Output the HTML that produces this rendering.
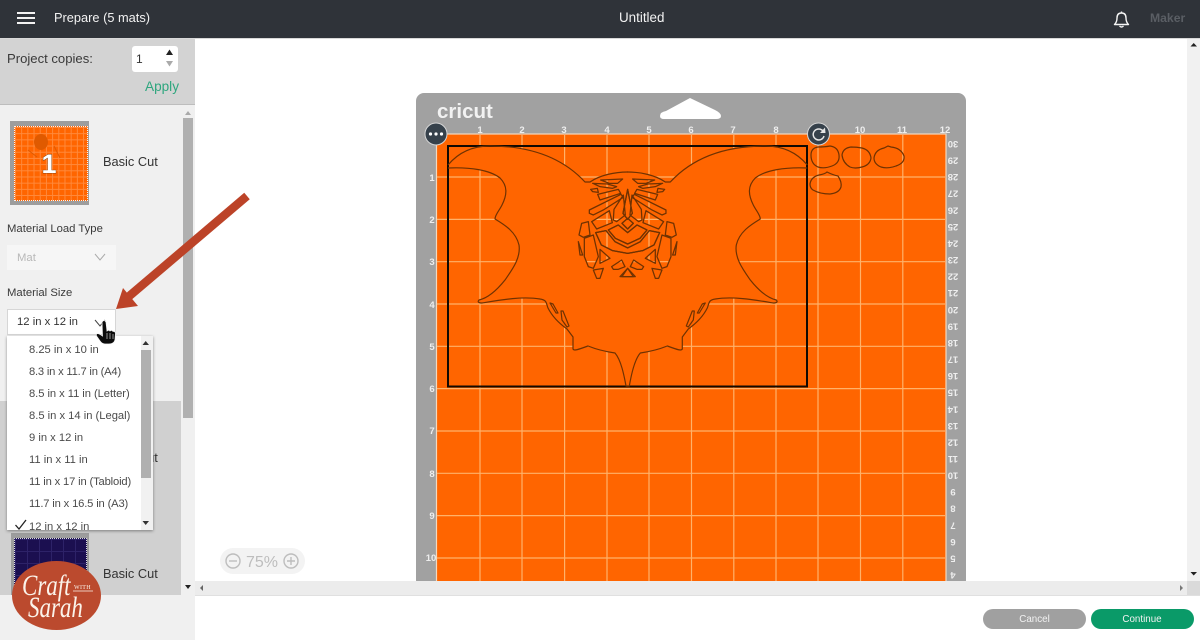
<!DOCTYPE html>
<html><head><meta charset="utf-8"><title>Prepare</title>
<style>
html,body{margin:0;padding:0;width:1200px;height:640px;overflow:hidden;background:#fff;font-family:"Liberation Sans",sans-serif;color:#333}
div,span{position:absolute;white-space:nowrap;box-sizing:border-box}
.t{line-height:16px;height:16px}
.item{left:29px;font-size:11.2px;color:#4a4a4a;line-height:14px}
svg{position:absolute;left:0;top:0}
</style></head><body>
<!-- main -->
<svg width="1200" height="640" viewBox="0 0 1200 640" style="z-index:1">
<defs>
<path id="hp" transform="translate(550,160) scale(.3333)" d="M152,60 L218,57 L203,70 L178,70 Z M128,70 L172,72 L200,80 L188,85 L150,80 Z M122,88 L142,85 L145,97 L128,95 Z M143,103 L205,88 L212,100 L150,120 Z M118,150 L213,103 L220,112 L160,150 L130,165 L118,160 Z M192,148 L220,105 L226,165 L200,185 L190,180 Z M233,88 L247,160 L233,178 L219,160 Z M125,185 L178,152 L187,188 L140,207 Z M233,175 L250,190 L233,207 L216,190 Z M175,210 L205,195 L233,218 L261,195 L291,210 L270,235 L233,252 L196,235 Z M137,218 L168,212 L195,245 L233,264 L271,245 L298,212 L329,218 L312,255 L278,272 L233,280 L188,272 L154,255 Z M87,225 L95,190 L115,185 L120,225 L100,232 Z M85,245 L98,285 L90,285 Z M103,235 L130,225 L145,290 L130,325 L115,320 L103,290 Z M150,268 L180,295 L150,310 Z M130,330 L160,325 L150,355 L140,355 Z M185,320 L215,300 L225,320 L205,328 L190,328 Z M233,325 L250,350 L210,350 Z"/>
<path id="sil" d="M448,165 C458,153 472,146 490,146 C525,146 560,155 585,182 L590,182 C600,175 615,172 628,172 L628,386 L626,386 C624,375 621,360 615,353 C608,352 598,350 588,346 C577,350 574,351 573,349 L573,337 L567,329 C560,324 553,318 548,308 C546,303 547,300 540,299 C522,296 500,300 482,303 C479,303 477,302 479,300 C488,298 497,290 505,280 C512,270 521,258 519,245 C516,232 505,225 495,219 C495,215 499,211 502,205 C507,195 508,186 500,178 C490,170 470,167 448,168 Z"/>
<g id="gr" stroke="#ffb26a" stroke-width="1.200">
<path d="M480,135V581M522,135V581M564.600,135V581M607,135V581M649,135V581M691.500,135V581M733.800,135V581M776,135V581M818,135V581M860.500,135V581M902.800,135V581"/>
<path d="M437,177H945M437,219.400H945M437,261.700H945M437,304H945M437,346.300H945M437,388.600H945M437,431H945M437,473.300H945M437,515.600H945M437,558H945"/>
</g>
<clipPath id="holes"><use href="#hp"/><use href="#hp" transform="matrix(-1 0 0 1 1255.300 0)"/></clipPath>
<g id="h" fill="none" stroke="#6f3202" stroke-width="1.200" stroke-linejoin="round">
<path d="M448,165 C458,153 472,146 490,146 C525,146 560,155 585,182 L590,182 C600,175 615,172 628,172"/>
<path d="M448,168 C470,167 490,170 500,178 C508,186 507,195 502,205 C499,211 495,215 495,219 C505,225 516,232 519,245 C521,258 512,270 505,280 C497,290 488,298 479,300 C477,302 479,303 482,303 C500,300 522,296 540,299 C547,300 546,303 548,308 C553,318 560,324 567,329 L573,337 L573,349 C574,351 577,350 588,346 C598,350 608,352 615,353 C621,360 624,375 626,386 L628,386"/>
<path d="M550,303 L553,304 L558,313 L556,313 Z M561,311 L563,311 L569,326 L567,327 L562,320 Z"/>
<use href="#hp" stroke-width="3.800"/>
</g>
</defs>
<rect x="416" y="93" width="550" height="495" rx="8" fill="#a1a1a1"/>
<path d="M660,116 Q660,112 666,111 L690,98 L715,110 Q721,113 721,116 Q721,119 716,119 L664,119 Q660,119 660,116Z" fill="#fff"/>
<text x="437" y="118" font-size="20.500" font-weight="bold" fill="#f2f2f2">cricut</text>
<rect x="436.500" y="134" width="509.500" height="455" fill="#ff6500" stroke="#f2d9bf" stroke-width="1.200"/>
<use href="#gr"/>
<use href="#sil" fill="#ff6500"/>
<use href="#sil" fill="#ff6500" transform="matrix(-1 0 0 1 1255.300 0)"/>
<g clip-path="url(#holes)"><use href="#gr"/></g>
<rect x="448" y="146" width="359" height="240.500" fill="none" stroke="#120a02" stroke-width="2"/>
<use href="#h"/>
<use href="#h" transform="matrix(-1 0 0 1 1255.300 0)"/>
<g fill="none" stroke="#6f3202" stroke-width="1.200">
<path d="M811,155 Q811,148 818,147 Q825,147 830,146 Q838,147 839,155 Q840,163 832,166 Q824,169 818,167 Q811,164 811,155Z"/>
<path d="M842,155 Q843,148 851,147 Q857,147 862,148 Q870,150 871,158 Q870,165 862,167 Q855,169 850,167 Q843,163 842,155Z"/>
<path d="M874,158 Q875,150 884,148 L888,146 L891,147 Q901,148 904,156 Q905,163 896,166 Q888,169 881,167 Q874,164 874,158Z"/>
<path d="M810,184 Q811,177 819,175 Q825,174 827,172 Q833,175 838,176 Q842,182 841,187 Q839,193 830,194 Q820,194 813,190 Q810,188 810,184Z"/>
</g>
<g font-size="9.500" font-weight="bold" fill="#eeeeee" text-anchor="middle">
<text x="480" y="133">1</text><text x="522" y="133">2</text><text x="564" y="133">3</text><text x="607" y="133">4</text><text x="649" y="133">5</text><text x="691" y="133">6</text><text x="733" y="133">7</text><text x="776" y="133">8</text><text x="860" y="133">10</text><text x="902" y="133">11</text><text x="945" y="133">12</text>
<text x="432" y="181">1</text><text x="432" y="223">2</text><text x="432" y="265">3</text><text x="432" y="308">4</text><text x="432" y="350">5</text><text x="432" y="392">6</text><text x="432" y="434">7</text><text x="432" y="477">8</text><text x="432" y="519">9</text><text x="431" y="561">10</text>
<text x="953" y="147" transform="rotate(180 953 144)">30</text>
<text x="953" y="163.600" transform="rotate(180 953 160.600)">29</text>
<text x="953" y="180.200" transform="rotate(180 953 177.200)">28</text>
<text x="953" y="196.700" transform="rotate(180 953 193.700)">27</text>
<text x="953" y="213.300" transform="rotate(180 953 210.300)">26</text>
<text x="953" y="229.900" transform="rotate(180 953 226.900)">25</text>
<text x="953" y="246.500" transform="rotate(180 953 243.500)">24</text>
<text x="953" y="263" transform="rotate(180 953 260)">23</text>
<text x="953" y="279.600" transform="rotate(180 953 276.600)">22</text>
<text x="953" y="296.200" transform="rotate(180 953 293.200)">21</text>
<text x="953" y="312.800" transform="rotate(180 953 309.800)">20</text>
<text x="953" y="329.400" transform="rotate(180 953 326.400)">19</text>
<text x="953" y="345.900" transform="rotate(180 953 342.900)">18</text>
<text x="953" y="362.500" transform="rotate(180 953 359.500)">17</text>
<text x="953" y="379.100" transform="rotate(180 953 376.100)">16</text>
<text x="953" y="395.700" transform="rotate(180 953 392.700)">15</text>
<text x="953" y="412.300" transform="rotate(180 953 409.300)">14</text>
<text x="953" y="428.800" transform="rotate(180 953 425.800)">13</text>
<text x="953" y="445.400" transform="rotate(180 953 442.400)">12</text>
<text x="953" y="462" transform="rotate(180 953 459)">11</text>
<text x="953" y="478.600" transform="rotate(180 953 475.600)">10</text>
<text x="953" y="495.200" transform="rotate(180 953 492.200)">9</text>
<text x="953" y="511.700" transform="rotate(180 953 508.700)">8</text>
<text x="953" y="528.300" transform="rotate(180 953 525.300)">7</text>
<text x="953" y="544.900" transform="rotate(180 953 541.900)">6</text>
<text x="953" y="561.500" transform="rotate(180 953 558.500)">5</text>
<text x="953" y="578" transform="rotate(180 953 575)">4</text>
</g>
<circle cx="436" cy="134" r="11" fill="#36414b" stroke="#d5d5d5" stroke-width="1"/>
<circle cx="430.500" cy="134" r="1.600" fill="#fff"/><circle cx="436" cy="134" r="1.600" fill="#fff"/><circle cx="441.500" cy="134" r="1.600" fill="#fff"/>
<circle cx="818.500" cy="134" r="11" fill="#36414b" stroke="#d5d5d5" stroke-width="1"/>
<path d="M823,131 A5.500,5.500 0 1 0 824,136" fill="none" stroke="#e6e6e6" stroke-width="1.500"/>
<path d="M820,133 L825.500,133 L825,127.500 Z" fill="#e6e6e6"/>
<!-- zoom -->
<rect x="220" y="548" width="85" height="26" rx="13" fill="#f3f3f3"/>
<circle cx="233" cy="561" r="7" fill="none" stroke="#bdbdbd" stroke-width="1.400"/>
<path d="M229,561H237" stroke="#bdbdbd" stroke-width="1.400"/>
<circle cx="291" cy="561" r="7" fill="none" stroke="#bdbdbd" stroke-width="1.400"/>
<path d="M287,561H295M291,557V565" stroke="#bdbdbd" stroke-width="1.400"/>
<text x="246" y="567" font-size="16" fill="#bdbdbd">75%</text>
<!-- scrollbars -->
<rect x="195" y="581" width="992" height="14" fill="#ececec"/>
<rect x="1187" y="38" width="13" height="543" fill="#f1f1f1"/>
<rect x="1187" y="581" width="13" height="14" fill="#dadada"/>
<rect x="195" y="595" width="1005" height="1" fill="#e0e0e0"/>
<path d="M1190.500,46.500 L1197,46.500 L1193.700,43Z M1190.500,572 L1197,572 L1193.700,575.500Z" fill="#222"/>
<path d="M203,585 L203,591 L200,588Z" fill="#666"/><path d="M1180,585 L1180,591 L1183,588Z" fill="#777"/>
<rect x="195" y="596" width="1005" height="44" fill="#fff"/>
<rect x="983" y="609" width="103" height="20" rx="10" fill="#a0a0a0"/>
<rect x="1091" y="609" width="103" height="20" rx="10" fill="#0a9a68"/>
<text x="1034.500" y="622" font-size="9.800" fill="#f2f2f2" text-anchor="middle">Cancel</text>
<text x="1142" y="622" font-size="9.800" fill="#f2f2f2" text-anchor="middle">Continue</text>
</svg>

<!-- header -->
<div style="left:0;top:0;width:1200px;height:38px;background:#2f3339;z-index:3"></div>
<div style="left:0;top:38px;width:1200px;height:1px;background:#d8d8d8;z-index:3"></div>
<div style="left:17px;top:12px;width:18px;height:2px;background:#f2f2f2;z-index:4"></div>
<div style="left:17px;top:17px;width:18px;height:2px;background:#f2f2f2;z-index:4"></div>
<div style="left:17px;top:22px;width:18px;height:2px;background:#f2f2f2;z-index:4"></div>
<div class="t" style="left:54px;top:9.500px;font-size:12.800px;color:#f2f2f2;z-index:4">Prepare (5 mats)</div>
<div class="t" style="left:619px;top:9.500px;font-size:13.400px;color:#f2f2f2;z-index:4">Untitled</div>
<div class="t" style="left:1150px;top:9.500px;font-size:12.200px;font-weight:bold;color:#5a5e64;z-index:4">Maker</div>
<svg width="1200" height="38" viewBox="0 0 1200 38" style="z-index:4">
<path d="M1114.500,24.500 Q1117,22 1117,18 Q1117,13 1121.500,13 Q1126,13 1126,18 Q1126,22 1128.500,24.500 Z" fill="none" stroke="#f5f5f5" stroke-width="1.400" stroke-linejoin="round"/>
<path d="M1119.500,26 Q1121.500,28 1123.500,26" fill="none" stroke="#f5f5f5" stroke-width="1.300"/>
<path d="M1121.500,11.500V13" stroke="#f5f5f5" stroke-width="1.400"/>
</svg>

<!-- sidebar -->
<div style="left:0;top:39px;width:195px;height:601px;background:#f0f0f0;z-index:2"></div>
<div style="left:0;top:39px;width:195px;height:66px;background:#d3d3d3;border-bottom:1px solid #bdbdbd;z-index:2"></div>
<div class="t" style="left:7px;top:51px;font-size:13.100px;color:#3a3a3a;z-index:3">Project copies:</div>
<div style="left:132px;top:46px;width:46px;height:26px;background:#fff;border-radius:3px;z-index:3"></div>
<div class="t" style="left:136px;top:51px;font-size:12px;color:#333;z-index:4">1</div>
<svg width="195" height="120" viewBox="0 0 195 120" style="z-index:4">
<path d="M166,55 L173,55 L169.500,49.500Z" fill="#222"/>
<path d="M166,61 L173,61 L169.500,66.500Z" fill="#aaa"/>
<path d="M185,115 L191,115 L188,111Z" fill="#aaa"/>
</svg>
<div class="t" style="left:145px;top:79px;font-size:13.600px;color:#2ea67e;z-index:3">Apply</div>
<div style="left:183px;top:118px;width:10px;height:300px;background:#b0b0b0;z-index:3"></div>

<!-- thumbs -->
<div style="left:10px;top:121px;width:79px;height:84px;background:#9d9d9d;z-index:3"></div>
<div style="left:14px;top:126px;width:74px;height:75px;background-color:#ff6500;background-image:linear-gradient(#ff8a3c 1px,transparent 1px),linear-gradient(90deg,#ff8a3c 1px,transparent 1px);background-size:6.200px 6.200px;border:1px dotted #f4f4f4;z-index:3"></div>
<svg width="195" height="210" viewBox="0 0 195 210" style="z-index:4">
<ellipse cx="41" cy="142" rx="7" ry="8" fill="#e05a00"/>
<path d="M28,150 L37,157 M54,146 L60,158" stroke="#e05a00" stroke-width="1"/>
<text x="49" y="173" font-size="27" font-weight="bold" fill="#fff" stroke="#6b3a10" stroke-width=".8" text-anchor="middle" paint-order="stroke">1</text>
</svg>
<div class="t" style="left:103px;top:154px;font-size:12.800px;color:#333;z-index:3">Basic Cut</div>
<div class="t" style="left:7px;top:221px;font-size:11.300px;color:#3a3a3a;z-index:3">Material Load Type</div>
<div style="left:7px;top:245px;width:109px;height:25px;background:#f6f6f6;z-index:3"></div>
<div class="t" style="left:17px;top:250px;font-size:11.300px;color:#b8b8b8;z-index:4">Mat</div>
<div class="t" style="left:7px;top:285px;font-size:11.300px;color:#3a3a3a;z-index:3">Material Size</div>
<div style="left:7px;top:309px;width:109px;height:26px;background:#fff;border:1px solid #d6d6d6;z-index:3"></div>
<div class="t" style="left:17px;top:314px;font-size:11.300px;color:#333;z-index:4">12 in x 12 in</div>

<!-- selected section -->
<div style="left:0;top:401px;width:181px;height:194px;background:#d0d0d0;z-index:2"></div>
<div class="t" style="left:103px;top:450px;font-size:12.800px;color:#333;z-index:3">Basic Cut</div>
<div style="left:183px;top:418px;width:10px;height:177px;background:#f0f0f0;z-index:3"></div>
<div style="left:11px;top:533px;width:78px;height:70px;background:#9d9d9d;z-index:3"></div>
<div style="left:14px;top:538px;width:73px;height:65px;background-color:#1b0f50;background-image:linear-gradient(#2d2268 1px,transparent 1px),linear-gradient(90deg,#2d2268 1px,transparent 1px);background-size:12px 12px;border:1px dotted #ddd;border-bottom:0;z-index:3"></div>
<div class="t" style="left:103px;top:566px;font-size:12.800px;color:#333;z-index:3">Basic Cut</div>
<div style="left:0;top:595px;width:195px;height:45px;background:#f0f0f0;z-index:3"></div>
<svg width="195" height="640" viewBox="0 0 195 640" style="z-index:3"><path d="M185,585 L191,585 L188,589Z" fill="#222"/></svg>

<!-- dropdown -->
<div style="left:7px;top:336px;width:146px;height:194px;background:#fff;overflow:hidden;box-shadow:0 1px 3px rgba(0,0,0,.4);z-index:5">
<div style="left:134px;top:0;width:12px;height:194px;background:#f1f1f1"></div>
<div style="left:134px;top:14px;width:10px;height:128px;background:#b0b0b0"></div>
<div class="item" style="left:22px;top:7px">8.25 in x 10 in</div>
<div class="item" style="left:22px;top:29px;letter-spacing:-.2px">8.3 in x 11.7 in (A4)</div>
<div class="item" style="left:22px;top:51px;letter-spacing:-.05px">8.5 in x 11 in (Letter)</div>
<div class="item" style="left:22px;top:73px">8.5 in x 14 in (Legal)</div>
<div class="item" style="left:22px;top:95px">9 in x 12 in</div>
<div class="item" style="left:22px;top:117px">11 in x 11 in</div>
<div class="item" style="left:22px;top:139px;letter-spacing:-.15px">11 in x 17 in (Tabloid)</div>
<div class="item" style="left:22px;top:161px;letter-spacing:-.15px">11.7 in x 16.5 in (A3)</div>
<div class="item" style="left:22px;top:184px">12 in x 12 in</div>
<svg width="146" height="194" viewBox="0 0 146 194">
<path d="M8.500,189 L12,193 L19,184" fill="none" stroke="#222" stroke-width="1.300"/>
<path d="M135.500,9 L142,9 L138.700,5Z M135.500,185 L142,185 L138.700,189Z" fill="#333"/>
</svg>
</div>

<!-- overlay svg: chevrons, arrow, hand -->
<svg width="1200" height="640" viewBox="0 0 1200 640" style="z-index:6">
<path d="M95,254 L100,260 L105,254" fill="none" stroke="#aaa" stroke-width="1"/>
<path d="M95,320 L100,326 L105,320" fill="none" stroke="#444" stroke-width="1"/>
<path d="M247,196 L127,298" stroke="#bc4328" stroke-width="8.500" fill="none"/>
<path d="M116,309 L123,288 L138,306 Z" fill="#bc4328"/>
<path d="M102,322 Q104,319 106,322 L107,331 Q109,329.500 110,331 Q112,329.500 113,331.500 Q115,331 115.500,333 L115,340 Q114,344 109,344 L105,344 Q102,344 100,341 L96.500,336 Q95.500,333.500 98,333.500 Q100,334 102.500,336 Z" fill="#0c0c0c" stroke="#f5f5f5" stroke-width=".8"/>
<path d="M107,333V339M110,333V339M113,334V339" stroke="#eee" stroke-width=".6"/>
<!-- logo -->
<ellipse cx="56.500" cy="595.500" rx="44.500" ry="34.500" fill="#bb4a2e"/>
<g fill="#fbf3ea" font-family="'Liberation Serif',serif" font-style="italic">
<text font-size="23" transform="translate(22,595) scale(1,1.300)">Craft</text>
<text x="74" y="589" font-size="6" font-style="normal" letter-spacing=".3">WITH</text>
<text font-size="23" transform="translate(28,617) scale(1,1.300)">Sarah</text>
</g>
<path d="M73,591 H93" stroke="#fbf3ea" stroke-width=".7"/>
</svg>
</body></html>
